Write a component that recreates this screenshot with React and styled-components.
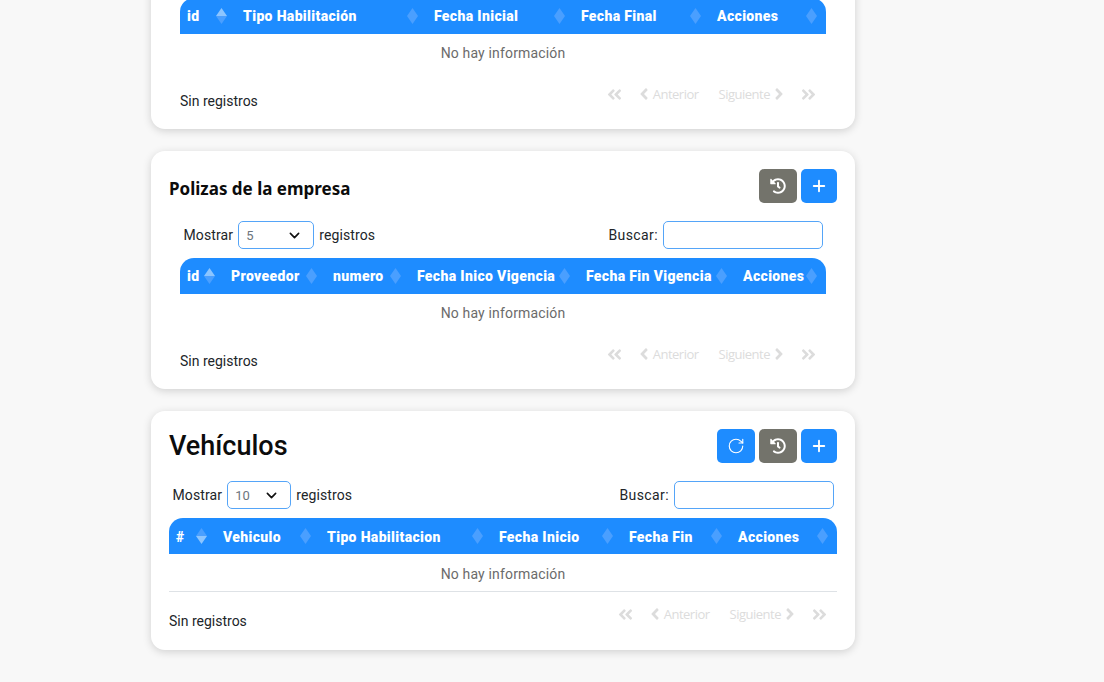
import React from "react"
import styled, { createGlobalStyle } from "styled-components"
import { FaHistory, FaAngleLeft, FaAngleRight, FaAngleDoubleLeft, FaAngleDoubleRight } from "react-icons/fa"
import { Plus, RotateCw } from "lucide-react"

const GlobalStyle = createGlobalStyle`
  html, body {
    margin: 0;
    padding: 0;
    height: 682px;
    overflow: hidden;
    background: #f8f8f8;
    font-family: Roboto, "Liberation Sans", sans-serif;
  }
`

const Page = styled.main`
  display: flex;
  flex-direction: column;
  gap: 22px;
  width: 704px;
  margin: -20px 0 0 151px;
`

const Card = styled.section`
  padding: 18px;
  background: #ffffff;
  border-radius: 14px;
  box-shadow: 0 2px 8px rgba(0, 0, 0, 0.16);
`

const Body = styled.div`
  padding: ${(p) => (p.$inset ? "0 11px" : "0")};
`

const CardHeader = styled.header`
  display: flex;
  align-items: center;
  justify-content: space-between;
  height: 34px;
`

const CompanyTitle = styled.h3`
  margin: 0;
  padding-top: 4px;
  color: #0c0c0c;
  font-family: "Noto Sans", sans-serif;
  font-size: 17px;
  font-weight: 700;
`

const PageTitle = styled.h2`
  margin: 0;
  color: #0c0c0c;
  font-size: 27px;
  font-weight: 500;
`

const Actions = styled.div`
  display: flex;
  gap: 4px;
`

const IconButton = styled.button`
  display: flex;
  align-items: center;
  justify-content: center;
  width: ${(p) => (p.$wide ? "38px" : "36px")};
  height: 34px;
  padding: 0;
  border: 0;
  border-radius: 5px;
  background: ${(p) => (p.$muted ? "#73736b" : "#1e8cff")};
  color: #ffffff;
`

const Controls = styled.div`
  display: flex;
  align-items: center;
  justify-content: space-between;
  height: 28px;
  margin: 18px 3px 9px 3.5px;
  color: #212529;
  font-size: 14px;
  letter-spacing: 0.12px;
`

const ControlGroup = styled.label`
  display: flex;
  align-items: center;
  gap: 5px;
`

const SearchGroup = styled(ControlGroup)`
  letter-spacing: 0.4px;
`

const PageSize = styled.select`
  width: ${(p) => p.$width}px;
  height: 28px;
  padding: 0 0 0 7px;
  border: 1px solid #55a5f8;
  border-radius: 5px;
  appearance: none;
  background: #ffffff url("data:image/svg+xml,%3Csvg xmlns='http://www.w3.org/2000/svg' viewBox='0 0 16 16'%3E%3Cpath fill='none' stroke='%23111111' stroke-linecap='round' stroke-linejoin='round' stroke-width='2.4' d='m2 5 6 6 6-6'/%3E%3C/svg%3E") no-repeat right 12px center / 13px 11px;
  color: #6c757d;
  font-family: Roboto, sans-serif;
  font-size: 13px;
`

const SearchInput = styled.input`
  box-sizing: border-box;
  width: 160px;
  height: 28px;
  border: 1px solid #55a5f8;
  border-radius: 5px;
  background: #ffffff;
`

const Table = styled.table`
  width: 100%;
  border-collapse: separate;
  border-spacing: 0;
  table-layout: fixed;
`

const HeadCell = styled.th`
  position: relative;
  box-sizing: border-box;
  width: ${(p) => p.$width}px;
  height: 36px;
  padding: ${(p) => (p.$ruled ? "1px 0 0 7px" : "0 0 0 7px")};
  background: #1e8cff;
  color: #ffffff;
  font-size: 14px;
  font-weight: 900;
  letter-spacing: 0.35px;
  text-align: left;
  white-space: nowrap;

  &:first-child {
    border-top-left-radius: 14px;
  }
  &:last-child {
    border-top-right-radius: 14px;
  }
`

const SortMark = styled.svg`
  position: absolute;
  top: 10px;
  right: 9px;
  width: 11px;
  height: 16px;
`

const EmptyCell = styled.td`
  box-sizing: border-box;
  height: ${(p) => (p.$ruled ? "38px" : "37px")};
  padding: ${(p) => (p.$ruled ? "2px 0 0" : "0")};
  border-bottom: ${(p) => (p.$ruled ? "1px solid #dee2e6" : "0")};
  color: #6b6b6b;
  font-size: 14px;
  letter-spacing: 0.16px;
  text-align: center;
`

const Footer = styled.footer`
  display: flex;
  justify-content: space-between;
  height: 40px;
`

const Info = styled.div`
  margin-top: ${(p) => (p.$ruled ? "19px" : "20px")};
  color: #212529;
  font-size: 14px;
  line-height: 20px;
`

const Pager = styled.nav`
  display: flex;
  margin-top: ${(p) => (p.$ruled ? "12px" : "13px")};
  margin-right: 1px;
  height: 20px;
`

const PagerItem = styled.span`
  display: flex;
  align-items: center;
  gap: 5px;
  padding: 0 10px;
  color: #dcdcdc;
  font-family: "Open Sans", sans-serif;
  font-size: 13px;
  letter-spacing: -0.5px;
`

/* react-icons draws into a square box, so trim the empty sides off */
const AnglePrev = styled(FaAngleLeft)`
  margin: 0 -5.5px;
`

const AngleNext = styled(FaAngleRight)`
  margin: 0 -5.5px;
`

const AngleFirst = styled(FaAngleDoubleLeft)`
  margin: 0 -2px;
`

const AngleLast = styled(FaAngleDoubleRight)`
  margin: 0 -2px;
`

const Sort = ({ active }) => (
  <SortMark viewBox="0 0 11 16">
    <path d="M5.5 0 11 8H0Z" fill={active === "up" ? "#8cc5ff" : "#4a9fff"} />
    <path d="M5.5 16 0 8h11Z" fill={active === "down" ? "#8cc5ff" : "#4a9fff"} />
  </SortMark>
)

const DataTable = ({ columns, sort, ruled }) => (
  <>
    <Table>
      <thead>
        <tr>
          {columns.map(([label, width], i) => (
            <HeadCell key={label} $width={width} $ruled={ruled}>
              {label}
              <Sort active={i === 0 ? sort : null} />
            </HeadCell>
          ))}
        </tr>
      </thead>
      <tbody>
        <tr>
          <EmptyCell colSpan={columns.length} $ruled={ruled}>No hay información</EmptyCell>
        </tr>
      </tbody>
    </Table>
    <Footer>
      <Info $ruled={ruled}>Sin registros</Info>
      <Pager $ruled={ruled}>
        <PagerItem><AngleFirst size={17} /></PagerItem>
        <PagerItem><AnglePrev size={18} />Anterior</PagerItem>
        <PagerItem>Siguiente<AngleNext size={18} /></PagerItem>
        <PagerItem><AngleLast size={17} /></PagerItem>
      </Pager>
    </Footer>
  </>
)

const TableControls = ({ size, width }) => (
  <Controls>
    <ControlGroup>
      Mostrar
      <PageSize $width={width} defaultValue={size}>
        <option>5</option>
        <option>10</option>
      </PageSize>
      registros
    </ControlGroup>
    <SearchGroup>
      Buscar:
      <SearchInput type="text" />
    </SearchGroup>
  </Controls>
)

const HistoryButton = () => (
  <IconButton $wide $muted><FaHistory size={16} /></IconButton>
)

const AddButton = () => (
  <IconButton><Plus size={18} strokeWidth={2.5} /></IconButton>
)

const habilitaciones = [
  ["id", 56], ["Tipo Habilitación", 191], ["Fecha Inicial", 147], ["Fecha Final", 136], ["Acciones", 116],
]
const polizas = [
  ["id", 44], ["Proveedor", 102], ["numero", 84], ["Fecha Inico Vigencia", 169], ["Fecha Fin Vigencia", 157], ["Acciones", 90],
]
const vehiculos = [
  ["#", 47], ["Vehiculo", 104], ["Tipo Habilitacion", 172], ["Fecha Inicio", 130], ["Fecha Fin", 109], ["Acciones", 106],
]

export default function App() {
  return (
    <Page>
      <GlobalStyle />
      <Card>
        <Body $inset>
          <DataTable columns={habilitaciones} sort="up" />
        </Body>
      </Card>

      <Card>
        <CardHeader>
          <CompanyTitle>Polizas de la empresa</CompanyTitle>
          <Actions>
            <HistoryButton />
            <AddButton />
          </Actions>
        </CardHeader>
        <Body $inset>
          <TableControls size="5" width={76} />
          <DataTable columns={polizas} sort="up" />
        </Body>
      </Card>

      <Card>
        <CardHeader>
          <PageTitle>Vehículos</PageTitle>
          <Actions>
            <IconButton $wide><RotateCw size={18} strokeWidth={1.5} /></IconButton>
            <HistoryButton />
            <AddButton />
          </Actions>
        </CardHeader>
        <Body>
          <TableControls size="10" width={64} />
          <DataTable columns={vehiculos} sort="down" ruled />
        </Body>
      </Card>
    </Page>
  )
}
